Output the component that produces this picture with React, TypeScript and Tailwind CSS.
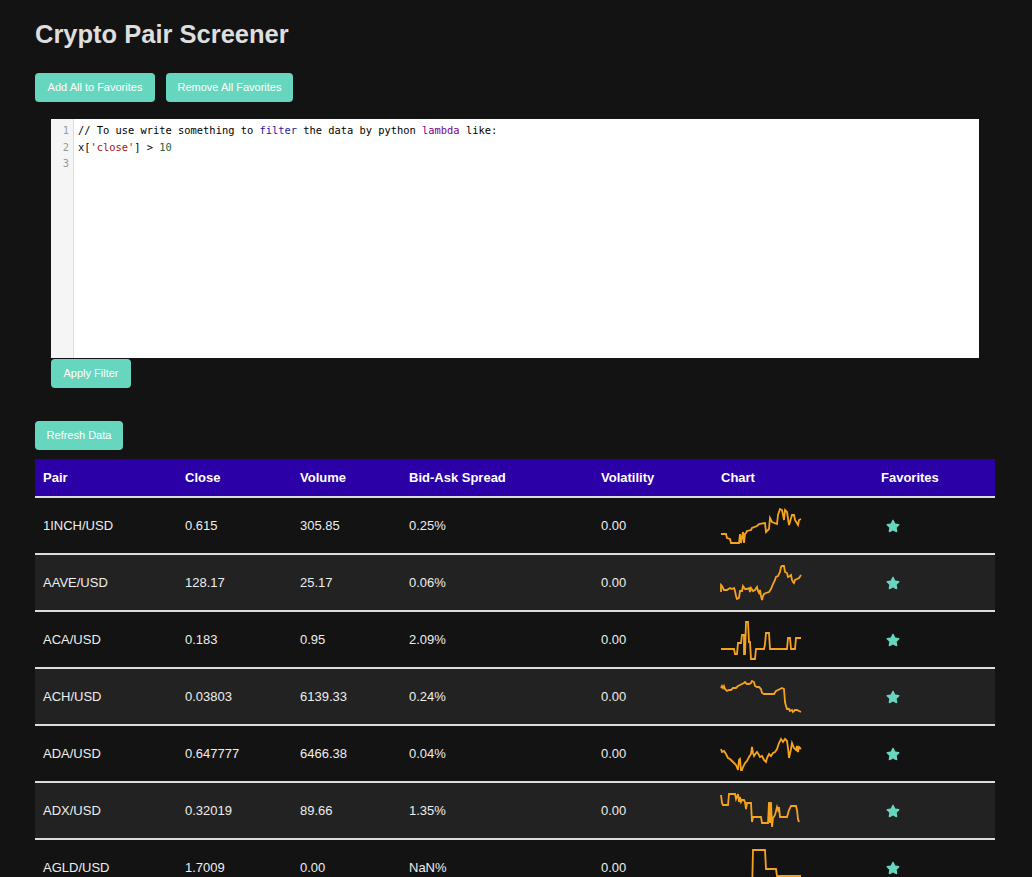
import React from 'react';
import { FaStar } from 'react-icons/fa';

type Row = {
    pair: string;
    close: string;
    volume: string;
    spread: string;
    volatility: string;
    chart: [number, number][];
};

const rows: Row[] = [
    {
        pair: '1INCH/USD', close: '0.615', volume: '305.85', spread: '0.25%', volatility: '0.00',
        chart: [[0, 28], [5, 28], [6, 32], [9, 33], [10, 37], [18, 37], [19, 28], [20, 37], [21, 31], [22, 26], [23, 37], [24, 28], [25, 27], [26, 25], [30, 24], [31, 22], [36, 20], [38, 18], [44, 17], [45, 26], [48, 23], [49, 12], [51, 16], [56, 18], [57, 9], [59, 3], [61, 4], [63, 14], [64, 4], [66, 6], [68, 19], [69, 16], [71, 9], [73, 9], [74, 14], [77, 19], [78, 14], [80, 13]],
    },
    {
        pair: 'AAVE/USD', close: '128.17', volume: '25.17', spread: '0.06%', volatility: '0.00',
        chart: [[0, 29], [0, 22], [1, 23], [3, 27], [6, 27], [9, 25], [11, 26], [13, 25], [14, 28], [15, 33], [16, 36], [18, 35], [19, 28], [21, 28], [22, 23], [24, 26], [26, 26], [28, 25], [29, 29], [30, 25], [32, 28], [34, 27], [36, 24], [37, 28], [38, 30], [39, 27], [40, 33], [41, 37], [42, 33], [43, 31], [45, 30], [48, 29], [50, 26], [52, 21], [54, 17], [55, 14], [57, 13], [59, 9], [60, 4], [61, 3], [63, 3], [64, 9], [66, 10], [67, 14], [69, 13], [70, 12], [71, 17], [72, 19], [73, 20], [74, 17], [76, 16], [78, 15], [80, 12]],
    },
    {
        pair: 'ACA/USD', close: '0.183', volume: '0.95', spread: '2.09%', volatility: '0.00',
        chart: [[0, 29], [13, 29], [14, 34], [16, 34], [17, 23], [20, 23], [21, 15], [23, 15], [23, 34], [24, 34], [25, 2], [27, 2], [28, 22], [29, 22], [30, 39], [34, 39], [35, 29], [43, 29], [44, 24], [45, 13], [48, 13], [49, 29], [66, 29], [67, 18], [69, 18], [70, 29], [74, 29], [75, 18], [80, 18]],
    },
    {
        pair: 'ACH/USD', close: '0.03803', volume: '6139.33', spread: '0.24%', volatility: '0.00',
        chart: [[0, 11], [1, 9], [2, 11], [3, 9], [4, 12], [6, 14], [8, 13], [10, 13], [12, 11], [15, 11], [17, 9], [19, 8], [21, 7], [23, 6], [24, 5], [26, 7], [28, 7], [30, 6], [31, 4], [33, 5], [34, 9], [36, 10], [38, 10], [40, 12], [41, 16], [43, 17], [50, 17], [53, 17], [55, 14], [57, 13], [59, 12], [61, 11], [63, 12], [64, 25], [65, 29], [66, 32], [68, 32], [69, 34], [71, 33], [72, 35], [74, 33], [76, 33], [78, 34], [80, 35]],
    },
    {
        pair: 'ADA/USD', close: '0.647777', volume: '6466.38', spread: '0.04%', volatility: '0.00',
        chart: [[0, 15], [1, 18], [3, 17], [5, 20], [7, 24], [9, 25], [11, 27], [13, 29], [15, 31], [17, 36], [18, 26], [19, 25], [20, 36], [21, 36], [22, 33], [24, 29], [26, 27], [28, 23], [30, 20], [31, 13], [32, 19], [33, 22], [35, 19], [36, 18], [38, 21], [39, 23], [41, 22], [43, 26], [45, 28], [46, 24], [48, 20], [50, 22], [52, 19], [54, 18], [56, 15], [58, 9], [60, 5], [62, 8], [64, 5], [66, 7], [67, 14], [68, 24], [70, 15], [71, 9], [73, 14], [75, 16], [76, 12], [77, 18], [78, 13], [80, 15]],
    },
    {
        pair: 'ADX/USD', close: '0.32019', volume: '89.66', spread: '1.35%', volatility: '0.00',
        chart: [[0, 4], [1, 12], [2, 14], [7, 14], [8, 3], [14, 3], [15, 8], [17, 3], [18, 11], [19, 6], [20, 11], [21, 9], [23, 9], [24, 11], [25, 18], [26, 12], [30, 12], [31, 31], [32, 26], [40, 26], [41, 32], [47, 32], [48, 11], [49, 32], [50, 11], [51, 36], [52, 27], [54, 24], [56, 16], [57, 19], [58, 16], [59, 26], [66, 26], [68, 19], [70, 15], [75, 15], [76, 19], [77, 28], [78, 31]],
    },
    {
        pair: 'AGLD/USD', close: '1.7009', volume: '0.00', spread: 'NaN%', volatility: '0.00',
        chart: [[0, 45], [31, 45], [32, 2], [44, 2], [45, 21], [55, 21], [56, 28], [80, 28]],
    },
    {
        pair: 'AIR/USD', close: '0.0412', volume: '1520.40', spread: '0.61%', volatility: '0.00',
        chart: [[0, 20], [10, 22], [20, 18], [30, 25], [40, 15], [50, 19], [60, 12], [70, 16], [80, 14]],
    },
];

const Sparkline = ({ points }: { points: [number, number][] }) => (
    <svg width="80" height="40" viewBox="0 0 80 40" className="overflow-visible block">
        <polyline
            points={points.map(([x, y]) => `${x},${y}`).join(' ')}
            fill="none"
            stroke="#f5a31f"
            strokeWidth="1.8"
            strokeLinejoin="miter"
        />
    </svg>
);

const TealButton = ({ children, className = '' }: { children: React.ReactNode; className?: string }) => (
    <button className={`h-[29px] px-2 rounded bg-[#66d6be] text-white text-[11px] leading-none whitespace-nowrap ${className}`}>
        {children}
    </button>
);

const App: React.FC = () => {
    return (
        <div className="min-h-screen bg-[#131313] pl-[35px] pt-[19px] font-['Liberation_Sans',Arial,sans-serif]">
            <div className="w-[960px]">
                <h1 className="text-[25.5px] leading-[30px] font-bold text-[#dedede]">Crypto Pair Screener</h1>

                {/* Favorites actions */}
                <div className="mt-[24px] flex gap-[11px]">
                    <TealButton className="w-[120px]">Add All to Favorites</TealButton>
                    <TealButton className="w-[127px]">Remove All Favorites</TealButton>
                </div>

                {/* Filter editor */}
                <div className="mx-4 mt-[17px]">
                    <div className="h-[239px] bg-white flex font-['DejaVu_Sans_Mono',monospace] text-[10.4px] leading-[16.5px]">
                        <div className="w-[23px] bg-[#f5f5f5] border-r border-[#dddddd] pt-[3px] pr-[4px] text-right text-[#999999]">
                            <div>1</div>
                            <div>2</div>
                            <div>3</div>
                        </div>
                        <div className="pl-[4px] pt-[3px] text-black">
                            <div>
                                // To use write something to <span className="text-[#1a1aa6]">filter</span> the data by python{' '}
                                <span className="text-[#770088]">lambda</span> like:
                            </div>
                            <div>
                                x[<span className="text-[#a11]">'close'</span>] &gt; <span className="text-[#164]">10</span>
                            </div>
                            <div>&nbsp;</div>
                        </div>
                    </div>
                    <TealButton className="block mt-px w-[80px]">Apply Filter</TealButton>
                </div>

                <TealButton className="block mt-[33px] w-[88px]">Refresh Data</TealButton>

                {/* Pair table */}
                <table className="mt-[9px] w-[960px] table-fixed border-collapse text-[13px] text-[#eeeeee]">
                    <thead>
                        <tr className="bg-[#2b00a6] border-b-2 border-[#dddddd] h-[38px] text-left text-white">
                            <th className="w-[142px] px-2 font-bold">Pair</th>
                            <th className="w-[115px] px-2 font-bold">Close</th>
                            <th className="w-[109px] px-2 font-bold">Volume</th>
                            <th className="w-[192px] px-2 font-bold">Bid-Ask Spread</th>
                            <th className="w-[120px] px-2 font-bold">Volatility</th>
                            <th className="w-[160px] px-2 font-bold">Chart</th>
                            <th className="w-[122px] px-2 font-bold">Favorites</th>
                        </tr>
                    </thead>
                    <tbody>
                        {rows.map((row, i) => (
                            <tr
                                key={row.pair}
                                className={`h-[57px] border-b-2 border-[#dddddd] ${i % 2 === 1 ? 'bg-[#222222]' : 'bg-[#131313]'}`}
                            >
                                <td className="px-2">{row.pair}</td>
                                <td className="px-2">{row.close}</td>
                                <td className="px-2">{row.volume}</td>
                                <td className="px-2">{row.spread}</td>
                                <td className="px-2">{row.volatility}</td>
                                <td className="px-2">
                                    <Sparkline points={row.chart} />
                                </td>
                                <td className="px-2">
                                    <FaStar className="ml-[5px] text-[#66d6be]" size={14} />
                                </td>
                            </tr>
                        ))}
                    </tbody>
                </table>
            </div>
        </div>
    );
};

export default App;
